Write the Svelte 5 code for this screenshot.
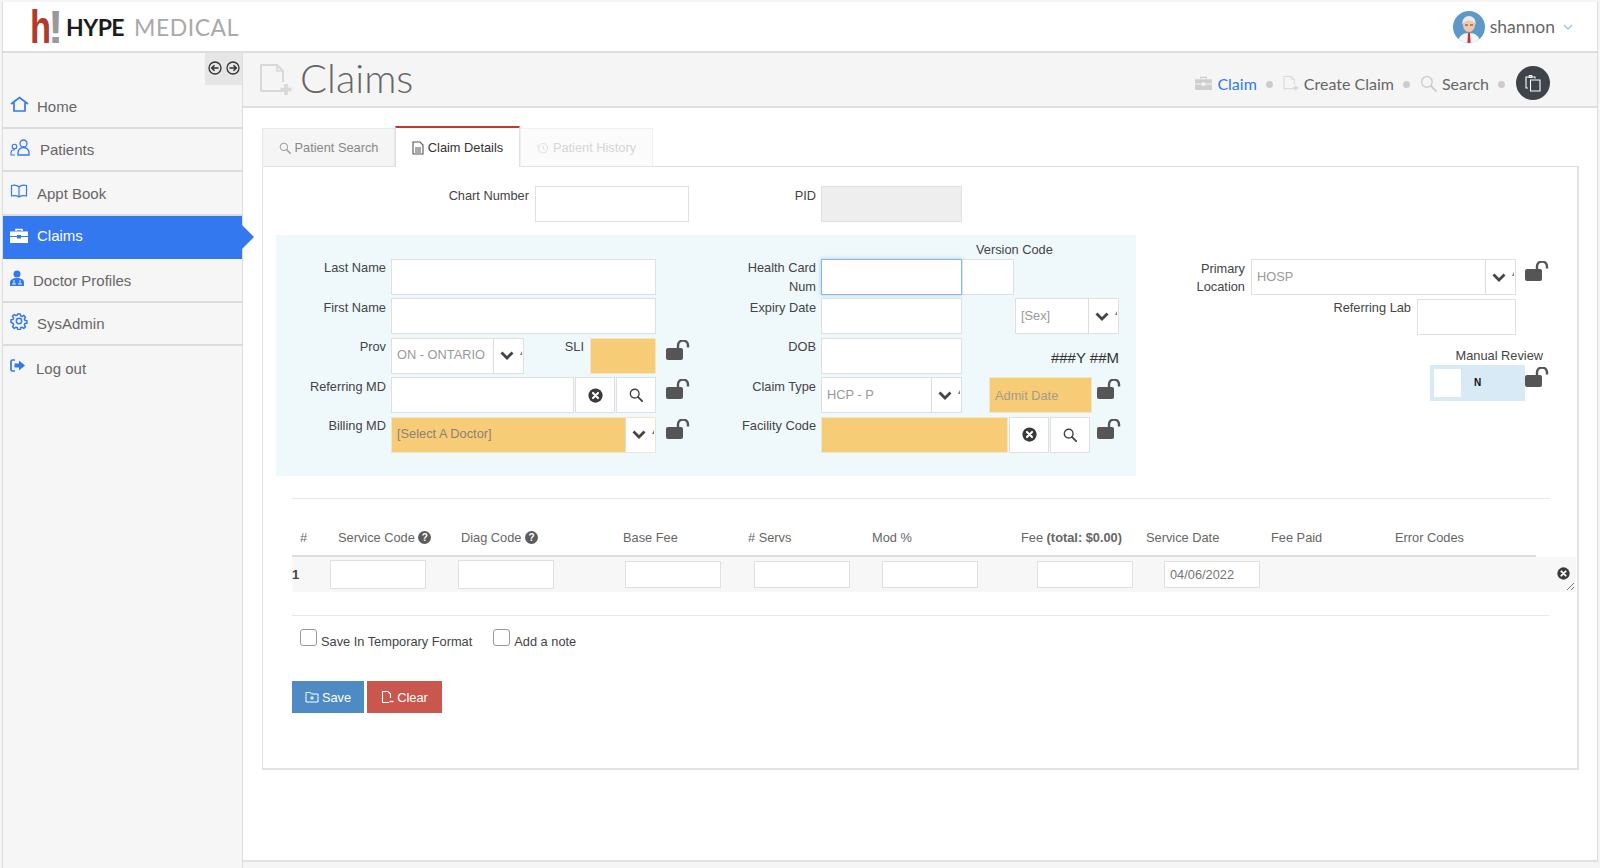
<script lang="ts">
	const navItems = [
		{ id: 'home', label: 'Home', left: 27 },
		{ id: 'patients', label: 'Patients', left: 30 },
		{ id: 'book', label: 'Appt Book', left: 27 },
		{ id: 'claims', label: 'Claims', left: 27, active: true },
		{ id: 'doctor', label: 'Doctor Profiles', left: 23 },
		{ id: 'gear', label: 'SysAdmin', left: 27 },
		{ id: 'logout', label: 'Log out', left: 26 }
	];
	const headers = ['#', 'Service Code', 'Diag Code', 'Base Fee', '# Servs', 'Mod %', 'Fee', 'Service Date', 'Fee Paid', 'Error Codes'];
</script>

{#snippet lock()}
	<svg class="lock" viewBox="0 0 24 20" width="24" height="20">
		<rect x="0" y="8" width="17" height="12" rx="2" fill="#555" />
		<path d="M12 9V5.5a5 5 0 0 1 10 0V7.5" fill="none" stroke="#555" stroke-width="2.4" />
	</svg>
{/snippet}

{#snippet clearIcon(size = 15)}
	<svg viewBox="0 0 16 16" width={size} height={size}>
		<circle cx="8" cy="8" r="7.6" fill="#3a3a3a" />
		<path d="M5.3 5.3l5.4 5.4M10.7 5.3l-5.4 5.4" stroke="#fff" stroke-width="2.2" stroke-linecap="round" />
	</svg>
{/snippet}

{#snippet searchIcon(color = '#444', size = 14, w = 1.6)}
	<svg viewBox="0 0 16 16" width={size} height={size}>
		<circle cx="6.5" cy="6.5" r="5" fill="none" stroke={color} stroke-width={w} />
		<path d="M10.2 10.2l4.8 4.8" stroke={color} stroke-width={w + 0.5} stroke-linecap="round" />
	</svg>
{/snippet}

{#snippet chevron()}
	<svg class="chev" viewBox="0 0 14 9" width="14" height="9">
		<path d="M1.5 1.5L7 7l5.500-5.500" fill="none" stroke="#444" stroke-width="2.8" />
	</svg>
	<span class="caret"></span>
{/snippet}

{#snippet filePlus(color = '#ddd', w = 34, h = 34)}
	<svg viewBox="0 0 34 34" width={w} height={h}>
		<path d="M24 28H2V2h16l6 6v11" fill="none" stroke={color} stroke-width="2" stroke-linejoin="round" />
		<path d="M18 2v6h6" fill="none" stroke={color} stroke-width="1.6" />
		<path d="M27 21v11M21.5 26.5h11" stroke={color} stroke-width="3.6" />
	</svg>
{/snippet}

{#snippet briefcase(color, w, h)}
	<svg viewBox="0 0 18 15" width={w} height={h}>
		<path d="M6 3V1.5h6V3" fill="none" stroke={color} stroke-width="1.5" />
		<path d="M0 3.5h18V8h-7V7H7v1H0z M0 9h7v1.5h4V9h7v6H0z" fill={color} />
	</svg>
{/snippet}

{#snippet navIcon(id)}
	{#if id === 'home'}
		<svg viewBox="0 0 19 16" width="19" height="16">
			<path d="M1 8l8.5-6.5L18 8M4 6.8V15h11V6.8" fill="none" stroke="#3478f0" stroke-width="1.7" />
		</svg>
	{:else if id === 'patients'}
		<svg viewBox="0 0 21 17" width="21" height="17">
			<circle cx="13.5" cy="4.5" r="3.5" fill="none" stroke="#3478f0" stroke-width="1.3" />
			<path d="M8 16v-2.5a5.5 5 0 0 1 11 0V16z" fill="none" stroke="#3478f0" stroke-width="1.3" />
			<circle cx="4.5" cy="7.5" r="2.3" fill="none" stroke="#3478f0" stroke-width="1.1" />
			<path d="M5 16H1v-2.5c0-1.5 1.5-2.8 4-2.8" fill="none" stroke="#3478f0" stroke-width="1.1" />
		</svg>
	{:else if id === 'book'}
		<svg viewBox="0 0 18 14" width="18" height="14">
			<path d="M9 3C7.5 1.5 4 1 1.5 1.5V12C4 11.5 7.5 12 9 13c1.5-1 5-1.5 7.500-1V1.5C14 1 10.5 1.5 9 3zM9 3v10" fill="none" stroke="#3478f0" stroke-width="1.2" />
		</svg>
	{:else if id === 'claims'}
		{@render briefcase('#fff', 18, 15)}
	{:else if id === 'doctor'}
		<svg viewBox="0 0 14 16" width="14" height="16">
			<circle cx="7" cy="4" r="3.5" fill="#3478f0" />
			<path d="M0 16v-3.5C0 9.5 3 8 7 8s7 1.5 7 4.500V16z" fill="#3478f0" />
			<path d="M4 10v2M10 10v2M3 15v-2h2v2M9 15v-2h2v2" fill="none" stroke="#fff" stroke-width=".8" />
		</svg>
	{:else if id === 'gear'}
		<svg viewBox="0 0 18 18" width="18" height="18">
			<circle cx="9" cy="9" r="2.7" fill="none" stroke="#3478f0" stroke-width="1.5" />
			<path d="M7.6 1h2.8l.4 2.3 1.5.7 2-1.3 2 2-1.3 2 .6 1.5 2.3.4v2.8l-2.3.4-.6 1.5 1.3 2-2 2-2-1.3-1.5.6-.4 2.3H7.6l-.4-2.3-1.5-.6-2 1.3-2-2 1.3-2-.6-1.5L0 10.4V7.6l2.3-.4.6-1.5-1.3-2 2-2 2 1.3 1.5-.7z" transform="translate(1 1) scale(.89)" fill="none" stroke="#3478f0" stroke-width="1.7" stroke-linejoin="round" />
		</svg>
	{:else if id === 'logout'}
		<svg viewBox="0 0 16 13" width="16" height="13">
			<path d="M5 1H2.5A1.5 1.5 0 0 0 1 2.5v8A1.5 1.5 0 0 0 2.5 12H5" fill="none" stroke="#3478f0" stroke-width="1.7" />
			<path d="M4.5 4.5H9V1.5l6 5-6 5V8.5H4.5z" fill="#3478f0" />
		</svg>
	{/if}
{/snippet}

<div class="app">
	<header class="topbar">
		<div class="logo">
			<span class="logo-mark"><span class="logo-h">h</span><span class="logo-bang">!</span></span>
			<span class="logo-hype">HYPE</span>
			<span class="logo-medical">MEDICAL</span>
		</div>
		<div class="user">
			<svg class="avatar" viewBox="0 0 32 32" width="32" height="32">
				<clipPath id="av"><circle cx="16" cy="16" r="16" /></clipPath>
				<g clip-path="url(#av)">
					<rect width="32" height="32" fill="#5e97c9" />
					<path d="M5 32c0-7 5-10 11-10s11 3 11 10z" fill="#f4f6f8" />
					<path d="M15 22h2l.6 10h-3.2z" fill="#c0392b" />
					<ellipse cx="16" cy="14" rx="6" ry="7" fill="#f0c9a4" />
					<path d="M9.5 14c-1-6 3-9 6.500-9s7.5 3 6.500 9c-1-3-3-4.5-6.500-4.5S10.5 11 9.5 14z" fill="#e9ebee" />
					<path d="M12 14h3M17 14h3" stroke="#444" stroke-width="1" />
				</g>
			</svg>
			<span class="username">shannon</span>
			<svg viewBox="0 0 10 6" width="10" height="6"><path d="M1 1l4 4 4-4" fill="none" stroke="#9cc0ea" stroke-width="1.3" /></svg>
		</div>
	</header>

	<div class="body">
		<aside class="sidebar">
			<div class="toggle-row">
				<div class="toggles">
					<svg viewBox="0 0 14 14" width="14" height="14"><circle cx="7" cy="7" r="6" fill="none" stroke="#333" stroke-width="1.3" /><path d="M10.5 7H4M6.5 4.2L3.7 7l2.8 2.8" fill="none" stroke="#333" stroke-width="1.5" /></svg>
					<svg viewBox="0 0 14 14" width="14" height="14"><circle cx="7" cy="7" r="6" fill="none" stroke="#333" stroke-width="1.3" /><path d="M3.5 7H10M7.5 4.2L10.3 7l-2.8 2.8" fill="none" stroke="#333" stroke-width="1.5" /></svg>
				</div>
			</div>
			<nav>
				{#each navItems as item (item.id)}
					<div class="nav-item" class:active={item.active} class:last={item.id === 'logout'}>
						<span class="nav-icon" style="width: {item.left}px">{@render navIcon(item.id)}</span>
						<span class="nav-label">{item.label}</span>
					</div>
				{/each}
			</nav>
		</aside>

		<main class="main">
			<div class="titlebar">
				<div class="title">
					{@render filePlus('#d9d9d9')}
					<h1>Claims</h1>
				</div>
				<div class="crumbs">
					{@render briefcase('#cfcfcf', 17, 14)}
					<span class="crumb current">Claim</span>
					<span class="dot"></span>
					{@render filePlus('#d5d5d5', 16, 19)}
					<span class="crumb">Create Claim</span>
					<span class="dot"></span>
					{@render searchIcon('#cfcfcf', 17, 1.4)}
					<span class="crumb">Search</span>
					<span class="dot"></span>
					<span class="round-btn">
						<svg viewBox="0 0 18 18" width="18" height="18">
							<path d="M4 14H2V3h9v1.5" fill="none" stroke="#fff" stroke-width="1.1" />
							<path d="M5 1.5h3v2H5z" fill="none" stroke="#fff" stroke-width="1" />
							<path d="M6.5 6H16v11H6.5z" fill="none" stroke="#fff" stroke-width="1.1" />
						</svg>
					</span>
				</div>
			</div>

			<div class="tabs">
				<div class="tab">{@render searchIcon('#999', 12, 1.3)} Patient Search</div>
				<div class="tab selected">
					<svg viewBox="0 0 12 14" width="12" height="14"><path d="M1 1h7l3 3v9H1z" fill="none" stroke="#555" stroke-width="1.1" /><path d="M3 7h6M3 9h6M3 11h6" stroke="#555" stroke-width="1" /></svg>
					Claim Details
				</div>
				<div class="tab disabled">
					<svg viewBox="0 0 14 14" width="12" height="12"><path d="M2.5 4a5.5 5.5 0 1 1-1 3.5M1 3v3h3M7 4v3.5l2 1" fill="none" stroke="#ddd" stroke-width="1.1" /></svg>
					Patient History
				</div>
			</div>

			<section class="panel">
				<div class="chart-row">
					<label class="lab chart-lab" for="chart">Chart Number</label>
					<input id="chart" class="field chart-input" />
					<label class="lab pid-lab" for="pid">PID</label>
					<input id="pid" class="field pid-input" disabled />
				</div>

				<div class="claim-area">
					<div class="blue">
						<div class="version-label">Version Code</div>

						<div class="lab">Last Name</div>
						<input class="field" />
						<div></div>
						<div class="lab">Health Card<br />Num</div>
						<input class="field focused" />
						<div class="sixth"><input class="field version" /></div>

						<div class="lab">First Name</div>
						<input class="field" />
						<div></div>
						<div class="lab">Expiry Date</div>
						<input class="field" />
						<div class="sixth end">
							<div class="select sex"><span class="sel-text">[Sex]</span><span class="sel-arrow">{@render chevron()}</span></div>
						</div>

						<div class="lab">Prov</div>
						<div class="inline">
							<div class="select prov"><span class="sel-text">ON - ONTARIO</span><span class="sel-arrow">{@render chevron()}</span></div>
							<div class="lab sli">SLI</div>
							<input class="field yellow sli-input" />
						</div>
						<div class="lockcell">{@render lock()}</div>
						<div class="lab">DOB</div>
						<input class="field" />
						<div class="sixth age">###Y ##M</div>

						<div class="lab">Referring MD</div>
						<div class="combo">
							<input class="field" />
							<span class="combo-btn">{@render clearIcon()}</span>
							<span class="combo-btn">{@render searchIcon()}</span>
						</div>
						<div class="lockcell">{@render lock()}</div>
						<div class="lab">Claim Type</div>
						<div class="select"><span class="sel-text">HCP - P</span><span class="sel-arrow">{@render chevron()}</span></div>
						<div class="sixth admit">
							<input class="field yellow admit-input" placeholder="Admit Date" />
							<div class="lockcell small">{@render lock()}</div>
						</div>

						<div class="lab">Billing MD</div>
						<div class="select yellow-select"><span class="sel-text">[Select A Doctor]</span><span class="sel-arrow">{@render chevron()}</span></div>
						<div class="lockcell">{@render lock()}</div>
						<div class="lab">Facility Code</div>
						<div class="facility">
							<div class="combo facility-combo">
								<input class="field yellow" />
								<span class="combo-btn">{@render clearIcon()}</span>
								<span class="combo-btn">{@render searchIcon()}</span>
							</div>
							<div class="lockcell small">{@render lock()}</div>
						</div>
					</div>

					<div class="side">
						<div class="side-row">
							<div class="lab side-lab">Primary<br />Location</div>
							<div class="select primary"><span class="sel-text">HOSP</span><span class="sel-arrow">{@render chevron()}</span></div>
							<div class="lockcell side-lock">{@render lock()}</div>
						</div>
						<div class="side-row lab-row">
							<div class="lab">Referring Lab</div>
							<input class="field lab-input" />
						</div>
						<div class="review-label">Manual Review</div>
						<div class="side-row review-row">
							<div class="switch"><span class="knob"></span><span class="switch-n">N</span></div>
							<div class="lockcell side-lock">{@render lock()}</div>
						</div>
					</div>
				</div>

				<div class="hr top-hr"></div>

				<div class="grid-head">
					{#each headers as h, i}
						<div class="th">
							{#if h === 'Fee'}
								Fee <strong>(total: $0.00)</strong>
							{:else}
								{h}
							{/if}
							{#if i === 1 || i === 2}<span class="help">?</span>{/if}
						</div>
					{/each}
				</div>
				<div class="grid-row">
					<strong class="row-num">1</strong>
					<input class="field cell tall" />
					<input class="field cell tall" />
					<input class="field cell" />
					<input class="field cell" />
					<input class="field cell" />
					<input class="field cell" />
					<input class="field cell date" value="04/06/2022" />
					<span class="row-x">{@render clearIcon(13)}</span>
					<svg class="grip" viewBox="0 0 9 9" width="9" height="9"><path d="M1 8l7-7M5 8l3-3" stroke="#777" stroke-width="1" /></svg>
				</div>

				<div class="hr bottom-hr"></div>

				<div class="checks">
					<label class="check"><input type="checkbox" /> Save In Temporary Format</label>
					<label class="check"><input type="checkbox" /> Add a note</label>
				</div>

				<div class="actions">
					<button class="btn save">
						<svg viewBox="0 0 14 12" width="14" height="12"><path d="M1 2.5V11h12V3H6.5L5.5 1.5H1zM7 5v4M5 7h4" fill="none" stroke="#fff" stroke-width="1" /></svg>
						Save
					</button>
					<button class="btn clear">
						<svg viewBox="0 0 13 14" width="13" height="14"><path d="M8 12.5H1.5v-11H7l2.5 2.5v4" fill="none" stroke="#fff" stroke-width="1.1" /><path d="M8.5 11.500h4" stroke="#fff" stroke-width="1.3" /></svg>
						Clear
					</button>
				</div>
			</section>
		</main>
	</div>
</div>

<style>
	:global(body) {
		margin: 0;
		font-family: "Liberation Sans", Arial, sans-serif;
		background: #f5f5f5;
	}

	.app {
		height: 868px;
		box-sizing: border-box;
		padding: 2px 2px 0;
		display: flex;
		flex-direction: column;
		overflow: hidden;
		background: #f5f5f5;
	}

	.topbar {
		height: 51px;
		flex: none;
		box-sizing: border-box;
		background: #fff;
		border: 1px solid #ddd;
		border-width: 0 1px 2px;
		display: flex;
		align-items: center;
		justify-content: space-between;
	}

	.logo {
		display: flex;
		align-items: center;
		padding-left: 27px;
		height: 100%;
	}

	.logo-mark {
		display: inline-flex;
		width: 36px;
		height: 40px;
		font: 700 46px/40px "Liberation Sans", sans-serif;
	}

	.logo-h {
		color: #b23a2a;
		display: inline-block;
		width: 18px;
		transform: scaleX(0.75);
		transform-origin: left center;
	}

	.logo-bang {
		color: #999;
		display: inline-block;
	}

	.logo-hype {
		font: 700 23px Lato, sans-serif;
		color: #1c1c1c;
		letter-spacing: -0.5px;
		margin-right: 10px;
	}

	.logo-medical {
		font: 400 23px Lato, sans-serif;
		color: #a9a9a9;
		letter-spacing: 0.5px;
	}

	.user {
		display: flex;
		align-items: center;
		padding-right: 24px;
		color: #666;
		font: 400 17.5px Lato, sans-serif;
	}

	.avatar {
		margin-right: 5px;
	}

	.username {
		margin-right: 8px;
	}

	.body {
		flex: 1;
		display: flex;
		min-height: 0;
		border-left: 1px solid #ddd;
	}

	.sidebar {
		width: 240px;
		flex: none;
		box-sizing: border-box;
		border-right: 1px solid #ddd;
		background: #f6f6f6;
		position: relative;
		z-index: 1;
	}

	.toggle-row {
		height: 32px;
		display: flex;
		justify-content: flex-end;
	}

	.toggles {
		width: 37px;
		background: #e6e6e6;
		display: flex;
		align-items: center;
		justify-content: center;
		gap: 4px;
		padding-bottom: 2px;
		box-sizing: border-box;
	}

	.nav-item {
		height: 43.5px;
		box-sizing: border-box;
		display: flex;
		align-items: center;
		padding-left: 7px;
		border-bottom: 2px solid #dcdcdc;
		font-size: 15px;
		color: #666;
		position: relative;
	}

	.nav-item.last {
		border-bottom: 0;
	}

	.nav-item.active {
		background: #3478f0;
		color: #fff;
		border-bottom: 0;
	}

	.nav-item.active::after {
		content: "";
		position: absolute;
		right: -12px;
		top: 9px;
		border-left: 12px solid #3478f0;
		border-top: 12px solid transparent;
		border-bottom: 12px solid transparent;
	}

	.nav-icon {
		display: inline-flex;
		flex: none;
		transform: translateY(-2px);
	}

	.nav-label {
		padding-top: 1px;
	}

	.active .nav-label {
		padding: 0 0 3px;
	}

	.main {
		flex: 1;
		min-width: 0;
		box-sizing: border-box;
		margin-bottom: 6px;
		background: #fff;
		border-right: 1px solid #ddd;
		border-bottom: 2px solid #e2e2e2;
	}

	.titlebar {
		height: 55px;
		box-sizing: border-box;
		background: #f5f5f5;
		border-bottom: 2px solid #dedede;
		display: flex;
		justify-content: space-between;
		align-items: center;
		padding: 0 47px 0 16px;
	}

	.title {
		display: flex;
		align-items: center;
		gap: 7px;
	}

	.title h1 {
		margin: 0 0 4px;
		font: 300 40px Lato, sans-serif;
		color: #666;
	}

	.crumbs {
		display: flex;
		align-items: center;
		font: 400 16px Lato, sans-serif;
		color: #666;
		padding-top: 7px;
	}

	.crumb {
		margin-left: 5px;
	}

	.crumb.current {
		color: #2f7bf0;
	}

	.dot {
		width: 7px;
		height: 7px;
		border-radius: 50%;
		background: #ccc;
		margin: 2px 10px 0 9px;
	}

	.round-btn {
		width: 34px;
		height: 34px;
		border-radius: 50%;
		background: #3f444b;
		display: inline-flex;
		align-items: center;
		justify-content: center;
		margin-left: 1px;
	}

	.tabs {
		display: flex;
		padding: 18px 0 0 19px;
		height: 59px;
		box-sizing: border-box;
		position: relative;
		z-index: 1;
		margin-bottom: -1px;
	}

	.tab {
		box-sizing: border-box;
		width: 133px;
		height: 39px;
		margin-top: 2px;
		display: flex;
		align-items: center;
		justify-content: center;
		gap: 4px;
		font-size: 12.8px;
		color: #888;
		background: #f5f5f5;
		border: 1px solid #e6e6e6;
		border-bottom-color: #e2e2e2;
	}

	.tab.selected {
		width: 125px;
		height: 41px;
		margin-top: 0;
		color: #333;
		background: #fff;
		border: 1px solid #e2e2e2;
		border-top: 2px solid #c0392b;
		border-bottom: 0;
	}

	.tab.disabled {
		color: #d6d6d6;
		background: #fbfbfb;
		border-color: #f0f0f0;
		border-bottom-color: #e2e2e2;
	}

	.panel {
		margin: 0 18px 0 19px;
		height: 604px;
		box-sizing: border-box;
		border: 1px solid #e2e2e2;
		border-bottom-width: 2px;
		border-right-width: 2px;
		padding: 19px 0 0 13px;
	}

	.lab {
		font-size: 12.8px;
		line-height: 18.5px;
		padding-top: 0.5px;
		color: #444;
		text-align: right;
		padding-right: 5px;
	}

	.field {
		box-sizing: border-box;
		width: 100%;
		height: 36px;
		margin: 0;
		min-width: 0;
		border: 1.5px solid #e0e0e0;
		background: #fff;
		padding: 0 5px;
		font: 12.8px "Liberation Sans", sans-serif;
		color: #888;
		border-radius: 0;
		outline: 0;
	}

	.field.focused {
		border-color: #8ab8e8;
		box-shadow: 0 0 4px rgba(120, 170, 230, 0.6);
	}

	.field.yellow {
		background: #f6cd76;
		border-color: #f0e6c8;
	}

	.field.yellow::placeholder {
		color: #a8998c;
		opacity: 1;
	}

	.chart-row {
		display: flex;
		height: 36px;
	}

	.chart-lab {
		width: 253px;
		box-sizing: border-box;
		margin-right: 6px;
		padding-right: 0;
	}

	.chart-input {
		width: 154px;
	}

	.pid-lab {
		width: 127px;
		box-sizing: border-box;
		margin-right: 5px;
		padding-right: 0;
	}

	.pid-input {
		width: 141px;
		background: #eee;
	}

	.claim-area {
		display: flex;
		margin-top: 13px;
	}

	.blue {
		width: 860px;
		height: 241px;
		flex: none;
		box-sizing: border-box;
		background: #eff8fb;
		display: grid;
		grid-template-columns: 115px 265px 44px 121px 141px 158px;
		grid-template-rows: 20.6px repeat(5, 36px);
		row-gap: 3.4px;
	}

	.version-label {
		grid-column: 1 / -1;
		font-size: 12.8px;
		color: #444;
		white-space: nowrap;
		padding: 7px 0 0 700px;
		line-height: 16px;
	}

	.version {
		width: 52px;
	}

	.sixth {
		display: flex;
		align-items: flex-start;
	}

	.sixth.end {
		justify-content: flex-end;
		padding-right: 1px;
	}

	.sex {
		width: 104px;
	}

	.age {
		justify-content: flex-end;
		padding: 11px 1px 0 0;
		font-size: 15px;
		line-height: 18px;
		color: #333;
	}

	.inline {
		display: flex;
	}

	.prov {
		width: 133px;
		flex: none;
	}

	.sli {
		flex: 1;
		padding-right: 6px;
	}

	.sli-input {
		width: 66px;
		flex: none;
	}

	.select {
		box-sizing: border-box;
		height: 36px;
		display: flex;
		background: #fff;
		border: 1.5px solid #e0e0e0;
	}

	.sel-text {
		flex: 1;
		min-width: 0;
		padding: 0 0 2px 5px;
		display: flex;
		align-items: center;
		font-size: 12.8px;
		color: #999;
		white-space: nowrap;
	}

	.sel-arrow {
		width: 30px;
		flex: none;
		box-sizing: border-box;
		background: #fff;
		border-left: 1.5px solid #ddd;
		display: flex;
		align-items: center;
		padding-left: 6px;
		position: relative;
	}

	.caret {
		position: absolute;
		right: 1px;
		top: 12px;
		border-bottom: 4px solid #777;
		border-left: 2px solid transparent;
		border-right: 0 solid transparent;
	}

	.yellow-select {
		background: #f6cd76;
		border-color: #f0e6c8;
	}

	.yellow-select .sel-text {
		color: #8d7f7a;
	}

	.combo {
		display: flex;
		gap: 1px;
		min-width: 0;
	}

	.combo .field {
		flex: 1;
		width: auto;
	}

	.combo-btn {
		width: 40px;
		flex: none;
		box-sizing: border-box;
		height: 36px;
		background: #fff;
		border: 1.5px solid #e0e0e0;
		display: inline-flex;
		align-items: center;
		justify-content: center;
	}

	.lockcell {
		padding: 2px 0 0 10px;
	}

	.lockcell.small {
		padding-left: 5px;
	}

	.lock {
		display: block;
	}

	.admit {
		padding-left: 27px;
	}

	.admit-input {
		width: 103px;
		flex: none;
	}

	.facility {
		grid-column: 5 / span 2;
		display: flex;
	}

	.facility .lockcell.small {
		padding-left: 7px;
	}

	.facility-combo {
		width: 269px;
		flex: none;
	}

	.side {
		flex: 1;
		padding-top: 24px;
	}

	.side-row {
		display: flex;
	}

	.side-lab {
		width: 115px;
		box-sizing: border-box;
		padding-right: 6px;
		flex: none;
	}

	.primary {
		width: 265px;
		flex: none;
	}

	.side-lock {
		padding: 2px 0 0 9px;
	}

	.lab-row {
		margin-top: 2px;
		justify-content: flex-end;
		width: 380px;
	}

	.lab-input {
		width: 99px;
		margin-left: 1px;
	}

	.review-label {
		margin-top: 12px;
		width: 407px;
		text-align: right;
		font-size: 12.8px;
		line-height: 18px;
		color: #444;
	}

	.review-row {
		margin-left: 294px;
	}

	.switch {
		width: 95px;
		height: 36px;
		box-sizing: border-box;
		background: #d8eaf5;
		padding: 4px;
		display: flex;
		align-items: center;
	}

	.knob {
		width: 27px;
		height: 28px;
		background: #fff;
		flex: none;
	}

	.switch-n {
		margin-left: 13px;
		font-size: 10px;
		font-weight: 700;
		color: #111;
	}

	.switch + .side-lock {
		padding-left: 0;
	}

	.hr {
		height: 1px;
		background: #e8e8e8;
		margin: 0 28px 0 16px;
	}

	.top-hr {
		margin-top: 22px;
	}

	.grid-head {
		height: 58px;
		box-sizing: border-box;
		margin: 0 41px 0 16px;
		border-bottom: 2px solid #ddd;
		display: grid;
		grid-template-columns: 38px 123px 162px 125px 124px 149px 125px 125px 124px 1fr;
		align-items: end;
		padding: 0 0 9px 8px;
		font-size: 12.8px;
		line-height: 16px;
		color: #666;
	}

	.th {
		white-space: nowrap;
	}

	.th strong {
		font-weight: 700;
		color: #666;
	}

	.help {
		display: inline-block;
		width: 13px;
		height: 13px;
		line-height: 13px;
		border-radius: 50%;
		background: #5c5c5c;
		color: #fff;
		font-size: 10px;
		font-weight: 700;
		text-align: center;
		vertical-align: 1px;
	}

	.grid-row {
		height: 35px;
		margin: 0 1px 0 16px;
		background: #f7f7f7;
		display: grid;
		grid-template-columns: 38px 128px 167px 129px 128px 155px 127px 1fr;
		align-items: center;
		position: relative;
	}

	.row-num {
		font-size: 13px;
		color: #444;
	}

	.cell {
		width: 96px;
		height: 27px;
	}

	.cell.tall {
		height: 29px;
	}

	.cell.date {
		color: #777;
	}

	.row-x {
		position: absolute;
		right: 6px;
		top: 10px;
		display: flex;
	}

	.grip {
		position: absolute;
		right: 1px;
		bottom: 1px;
	}

	.bottom-hr {
		margin-top: 23px;
	}

	.checks {
		display: flex;
		gap: 21px;
		padding: 13px 0 0 24px;
	}

	.check {
		display: flex;
		align-items: flex-end;
		font-size: 12.8px;
		color: #444;
		line-height: 15px;
		height: 20px;
		gap: 4px;
	}

	.check input {
		appearance: none;
		align-self: flex-start;
		width: 17px;
		height: 17px;
		margin: 0;
		background: #fff;
		border: 1.5px solid #999;
		border-radius: 3px;
	}

	.actions {
		display: flex;
		gap: 3px;
		padding: 32px 0 0 16px;
	}

	.btn {
		height: 32px;
		border: 0;
		padding: 0;
		color: #fff;
		font: 12.8px "Liberation Sans", sans-serif;
		display: inline-flex;
		align-items: center;
		justify-content: center;
		gap: 3px;
	}

	.save {
		width: 72px;
		background: #4e8bc4;
	}

	.clear {
		width: 75px;
		background: #c9574e;
	}
</style>
